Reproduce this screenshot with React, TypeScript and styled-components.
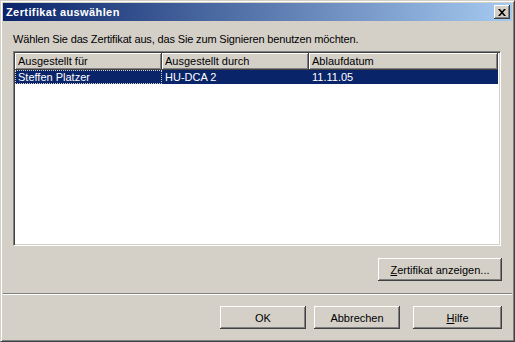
import React from 'react';
import styled, { createGlobalStyle } from 'styled-components';

const GlobalStyle = createGlobalStyle`
  html, body {
    margin: 0;
    padding: 0;
    background: #d4d0c8;
  }
  body {
    font-family: "Liberation Sans", Arial, sans-serif;
    font-size: 11px;
    color: #000;
  }
`;

const Window = styled.div`
  width: 515px;
  height: 342px;
  box-sizing: border-box;
  background: #d4d0c8;
  border: 1px solid;
  border-color: #d4d0c8 #404040 #404040 #d4d0c8;
  box-shadow: inset 1px 1px 0 #fff, inset -1px -1px 0 #808080;
  padding: 2px;
  display: flex;
  flex-direction: column;
`;

const TitleBar = styled.div`
  height: 18px;
  flex: none;
  display: flex;
  align-items: center;
  justify-content: space-between;
  padding: 0 2px 0 3px;
  background: linear-gradient(to right, #0a246a, #a6caf0);
`;

const Title = styled.span`
  color: #fff;
  font-weight: bold;
  font-size: 11px;
  letter-spacing: 0.4px;
`;

const raised = `
  background: #d4d0c8;
  border: none;
  box-shadow: inset -1px -1px 0 #404040, inset 1px 1px 0 #fff,
    inset -2px -2px 0 #808080, inset 2px 2px 0 #d4d0c8;
`;

const CloseButton = styled.div`
  ${raised}
  width: 16px;
  height: 14px;
  display: flex;
  align-items: center;
  justify-content: center;
`;

const Main = styled.div`
  padding: 12px 11px 0 10px;
  display: flex;
  flex-direction: column;
`;

const Label = styled.div`
  line-height: 13px;
  height: 13px;
  margin-bottom: 5px;
  letter-spacing: -0.15px;
`;

const ListBox = styled.div`
  height: 195px;
  box-sizing: border-box;
  background: #fff;
  border: 1px solid;
  border-color: #808080 #fff #fff #808080;
  box-shadow: inset 1px 1px 0 #404040, inset -1px -1px 0 #d4d0c8;
  padding: 1px 2px 2px 1px;
`;

const Row = styled.div`
  display: grid;
  grid-template-columns: 147px 147px 1fr;
`;

const HeaderCell = styled.div`
  ${raised}
  height: 17px;
  line-height: 16px;
  padding-left: 3px;
  box-sizing: border-box;
  white-space: nowrap;
`;

const Cell = styled.div<{ $focus?: boolean }>`
  height: 14px;
  line-height: 14px;
  padding-left: 3px;
  box-sizing: border-box;
  background: #0a246a;
  color: #fff;
  white-space: nowrap;
  outline: ${(p) => (p.$focus ? '1px dotted #d4d0c8' : 'none')};
  outline-offset: -1px;
`;

const ActionRow = styled.div`
  display: flex;
  justify-content: flex-end;
  margin: 12px -1px 0 0;
`;

const Button = styled.button<{ $w: number }>`
  ${raised}
  width: ${(p) => p.$w}px;
  height: 23px;
  padding: 0;
  font-family: "Liberation Sans", Arial, sans-serif;
  font-size: 11px;
  color: #000;
  text-align: center;
`;

const Separator = styled.div`
  margin-top: 12px;
  height: 1px;
  background: #808080;
  border-bottom: 1px solid #fff;
`;

const Footer = styled.div`
  display: flex;
  justify-content: flex-end;
  padding: 11px 10px 0 0;
`;

const Gap = styled.div<{ $w: number }>`
  width: ${(p) => p.$w}px;
`;

const App: React.FC = () => {
  return (
    <>
      <GlobalStyle />
      <Window>
        <TitleBar>
          <Title>Zertifikat auswählen</Title>
          <CloseButton>
            <svg width="8" height="7" viewBox="0 0 8 7">
              <path d="M0 0h2l2 2.2L6 0h2L5 3.5 8 7H6L4 4.8 2 7H0l3-3.5z" fill="#000" />
            </svg>
          </CloseButton>
        </TitleBar>
        <Main>
          <Label>Wählen Sie das Zertifikat aus, das Sie zum Signieren benutzen möchten.</Label>
          <ListBox>
            <Row>
              <HeaderCell>Ausgestellt für</HeaderCell>
              <HeaderCell>Ausgestellt durch</HeaderCell>
              <HeaderCell>Ablaufdatum</HeaderCell>
            </Row>
            <Row>
              <Cell $focus>Steffen Platzer</Cell>
              <Cell>HU-DCA 2</Cell>
              <Cell>11.11.05</Cell>
            </Row>
          </ListBox>
          <ActionRow>
            <Button $w={124}>
              <u>Z</u>ertifikat anzeigen...
            </Button>
          </ActionRow>
        </Main>
        <Separator />
        <Footer>
          <Button $w={86}>OK</Button>
          <Gap $w={8} />
          <Button $w={86}>Abbrechen</Button>
          <Gap $w={13} />
          <Button $w={89}>
            <u>H</u>ilfe
          </Button>
        </Footer>
      </Window>
    </>
  );
};

export default App;
